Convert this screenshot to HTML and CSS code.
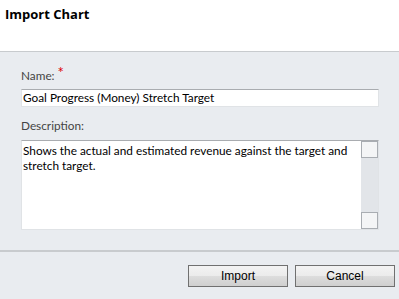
FILE: index.html
```html
<!DOCTYPE html>
<html lang="en">
<head>
  <meta charset="UTF-8">
  <title>Import Chart</title>
  <link rel="stylesheet" href="styles.css">
</head>
<body>
  <div class="dialog-header">
    <h1>Import Chart</h1>
  </div>

  <div class="dialog-body">
    <label class="field-label">Name: <span class="required">*</span></label>
    <div class="text-input">Goal Progress (Money) Stretch Target</div>

    <label class="field-label desc-label">Description:</label>
    <div class="text-area">
      <div class="text-area-content">Shows the actual and estimated revenue against the target and stretch target.</div>
      <div class="scrollbar">
        <div class="scroll-btn"></div>
        <div class="scroll-btn"></div>
      </div>
    </div>
  </div>

  <div class="dialog-footer">
    <button class="button">Import</button>
    <button class="button">Cancel</button>
  </div>
</body>
</html>
```

FILE: styles.css
```css
body {
  margin: 0;
  background-color: #e9ecf0;
  font-family: Lato, 'Noto Sans', sans-serif;
  font-size: 11.8px;
  color: #000;
  width: 399px;
  height: 299px;
  overflow: hidden;
}
.dialog-header {
  background: #fff;
  border-bottom: 1px solid #c8cbce;
  box-sizing: border-box;
  height: 52px;
}
.dialog-header h1 {
  margin: 0;
  padding: 5px 0 0 5px;
  font-family: 'Open Sans', sans-serif;
  font-size: 13px;
  font-weight: bold;
  color: #000;
}
.dialog-body {
  padding: 15px 20px 0 21px;
  height: 198px;
  box-sizing: border-box;
}
.field-label {
  display: block;
  color: #444;
  height: 22px;
}
.required {
  color: #d00;
  font-size: 15px;
  line-height: 10px;
  vertical-align: 2px;
}
.text-input {
  height: 18px;
  box-sizing: border-box;
  background: #fff;
  border: 1px solid #e0e3e6;
  border-top-color: #a9acb0;
  padding: 0 2px 0 1px;
  line-height: 16px;
  white-space: nowrap;
}
.desc-label {
  margin-top: 11px;
}
.text-area {
  display: flex;
  height: 90px;
  box-sizing: border-box;
  background: #fff;
  border: 1px solid #e0e3e6;
  border-top-color: #a9acb0;
}
.text-area-content {
  flex: 1;
  padding: 2px 1px;
  line-height: 15px;
}
.scrollbar {
  width: 17px;
  background: #e2e5e9;
  display: flex;
  flex-direction: column;
  justify-content: space-between;
}
.scroll-btn {
  height: 17px;
  box-sizing: border-box;
  border: 1px solid #a9adb2;
  background: #f4f5f6;
}
.dialog-footer {
  border-top: 2px solid #c8cbce;
  display: flex;
  justify-content: flex-end;
  gap: 7px;
  padding: 13px 4px 0 0;
}
.button {
  width: 100px;
  height: 22px;
  border: 1px solid #707070;
  background: linear-gradient(#f3f3f3 0%, #ebebeb 50%, #dddddd 51%, #cfcfcf 100%);
  font-family: 'Liberation Sans', Arial, sans-serif;
  font-size: 12px;
  color: #000;
  padding: 0;
}
```
